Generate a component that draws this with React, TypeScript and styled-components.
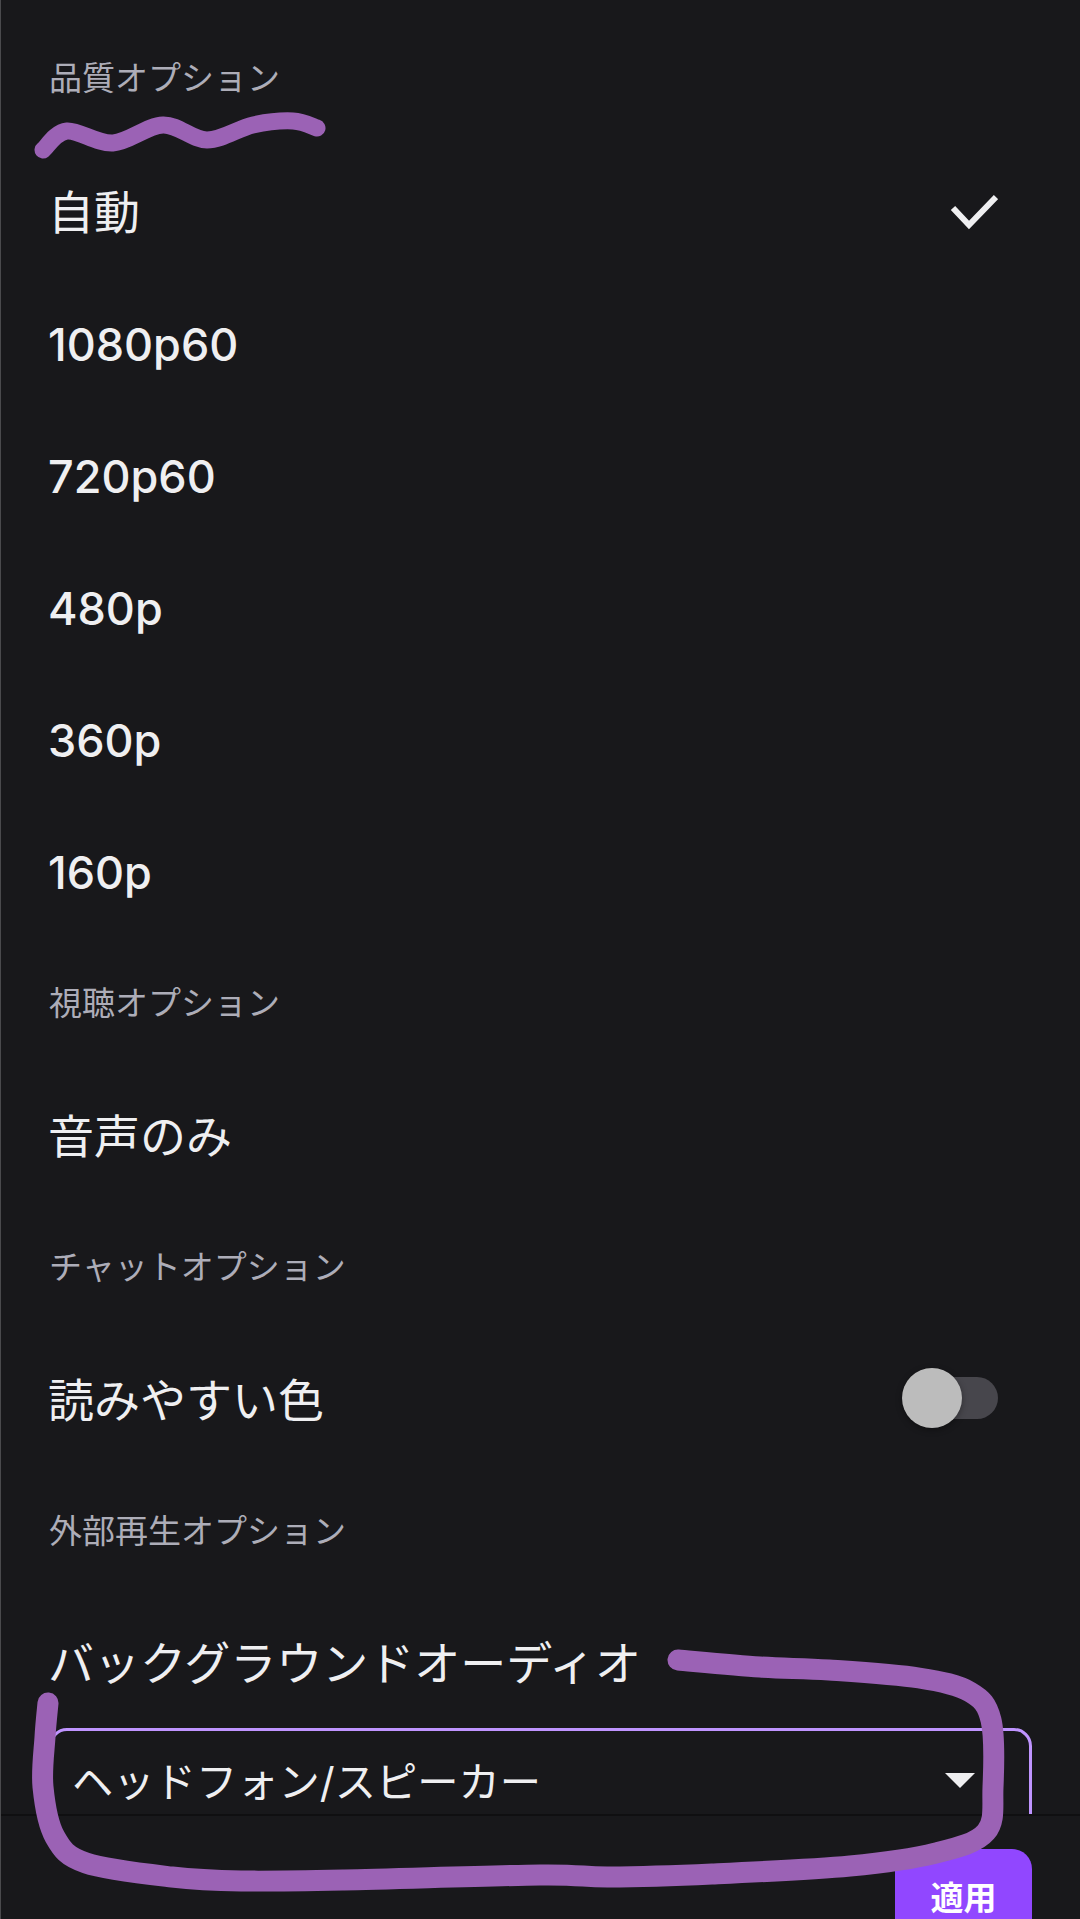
import styled, { createGlobalStyle } from "styled-components";

const GlobalStyle = createGlobalStyle`
  html, body {
    margin: 0;
    padding: 0;
    background: #18181b;
  }
`;

const Page = styled.div`
  position: relative;
  width: 1080px;
  height: 1919px;
  box-sizing: border-box;
  display: flex;
  flex-direction: column;
  overflow: hidden;
  background: #18181b;
  border-left: 1px solid #4a4a4d;
  font-family: Inter, "Noto Sans CJK JP", sans-serif;
  color: #efeff1;
`;

const Scroller = styled.div`
  flex: 1;
  min-height: 0;
  overflow: hidden;
  padding: 0 82px 0 48px;
`;

const SectionTitle = styled.div<{ $first?: boolean }>`
  height: ${(p) => (p.$first ? "146px" : "132px")};
  padding: ${(p) => (p.$first ? "5px 0 0" : "0 0 6px")};
  box-sizing: border-box;
  display: flex;
  align-items: center;
  font-size: 33px;
  color: #adadb8;
`;

const Row = styled.div<{ $short?: boolean }>`
  height: ${(p) => (p.$short ? "130px" : "132px")};
  display: flex;
  align-items: center;
  justify-content: space-between;
  white-space: nowrap;
`;

const Label = styled.span`
  display: block;
  margin-left: -1px;
  padding-bottom: 6px;
  font-size: 46px;
`;

const Quality = styled.span`
  margin-left: -1px;
  font-size: 45px;
  font-weight: 500;
`;

const Toggle = styled.div`
  position: relative;
  width: 82px;
  height: 42px;
  margin-top: -4px;
  border-radius: 21px;
  background: #47464c;
`;

const Knob = styled.div`
  position: absolute;
  left: -14px;
  top: -9px;
  width: 60px;
  height: 60px;
  border-radius: 50%;
  background: #bcbcbc;
  box-shadow: 0 2px 6px rgba(0, 0, 0, 0.35);
`;

const Select = styled.div`
  box-sizing: border-box;
  height: 110px;
  margin-right: -34px;
  padding: 0 54px 8px 20px;
  display: flex;
  align-items: center;
  justify-content: space-between;
  border: 3px solid #bf94ff;
  border-radius: 18px;
  font-size: 41.3px;
  white-space: nowrap;
`;

const Caret = styled.div`
  width: 0;
  height: 0;
  margin-top: 2px;
  border-left: 15px solid transparent;
  border-right: 15px solid transparent;
  border-top: 15px solid #efeff1;
`;

const Footer = styled.div`
  flex: none;
  height: 105px;
  box-sizing: border-box;
  padding: 33px 48px 0 0;
  display: flex;
  justify-content: flex-end;
  background: #18181b;
  border-top: 2px solid #0f0f11;
`;

const ApplyButton = styled.button`
  width: 137px;
  height: 100px;
  flex: none;
  padding: 0 0 6px;
  border: 0;
  border-radius: 20px;
  background: #9147ff;
  color: #ffffff;
  font-family: inherit;
  font-size: 33px;
  font-weight: 600;
`;

const Scribble = styled.svg`
  position: absolute;
  left: -1px;
  top: 0;
  pointer-events: none;
`;

// hand-drawn marks, smoothed through the points
function smooth(pts: number[][]) {
  let d = `M${pts[0][0]} ${pts[0][1]}`;
  for (let i = 0; i < pts.length - 1; i++) {
    const a = pts[Math.max(i - 1, 0)];
    const b = pts[i];
    const c = pts[i + 1];
    const e = pts[Math.min(i + 2, pts.length - 1)];
    const c1x = b[0] + (c[0] - a[0]) / 6;
    const c1y = b[1] + (c[1] - a[1]) / 6;
    const c2x = c[0] - (e[0] - b[0]) / 6;
    const c2y = c[1] - (e[1] - b[1]) / 6;
    d += ` C${c1x} ${c1y} ${c2x} ${c2y} ${c[0]} ${c[1]}`;
  }
  return d;
}

const underline = [
  [43, 150], [67, 131], [113, 143], [163, 125], [207, 140], [253, 125], [293, 121], [317, 128],
];

const circle = [
  [678, 1660], [760, 1667], [829, 1670], [919, 1678], [970, 1692], [991, 1720], [993, 1787],
  [986, 1832], [936, 1853], [850, 1866], [712, 1874], [609, 1877], [540, 1875], [344, 1880],
  [241, 1881], [172, 1877], [86, 1863], [55, 1837], [43, 1787], [45, 1737], [48, 1703],
];

const qualities = ["1080p60", "720p60", "480p", "360p", "160p"];

export default function App() {
  return (
    <>
      <GlobalStyle />
      <Page>
        <Scroller>
          <SectionTitle $first>品質オプション</SectionTitle>
          <Row>
            <Label>自動</Label>
            <svg width="50" height="40" viewBox="0 0 50 40">
              <path d="M5 16 L21 33 L48 5" fill="none" stroke="#efeff1" strokeWidth="6" />
            </svg>
          </Row>
          {qualities.map((q) => (
            <Row key={q}>
              <Quality>{q}</Quality>
            </Row>
          ))}
          <SectionTitle>視聴オプション</SectionTitle>
          <Row>
            <Label>音声のみ</Label>
          </Row>
          <SectionTitle>チャットオプション</SectionTitle>
          <Row>
            <Label>読みやすい色</Label>
            <Toggle>
              <Knob />
            </Toggle>
          </Row>
          <SectionTitle>外部再生オプション</SectionTitle>
          <Row $short>
            <Label>バックグラウンドオーディオ</Label>
          </Row>
          <Select>
            ヘッドフォン/スピーカー
            <Caret />
          </Select>
        </Scroller>
        <Footer>
          <ApplyButton>適用</ApplyButton>
        </Footer>
        <Scribble width="1080" height="1919" viewBox="0 0 1080 1919">
          <g fill="none" stroke="#9b62b5" strokeLinecap="round" strokeLinejoin="round">
            <path d={smooth(underline)} strokeWidth="17" />
            <path d={smooth(circle)} strokeWidth="21" />
          </g>
        </Scribble>
      </Page>
    </>
  );
}
